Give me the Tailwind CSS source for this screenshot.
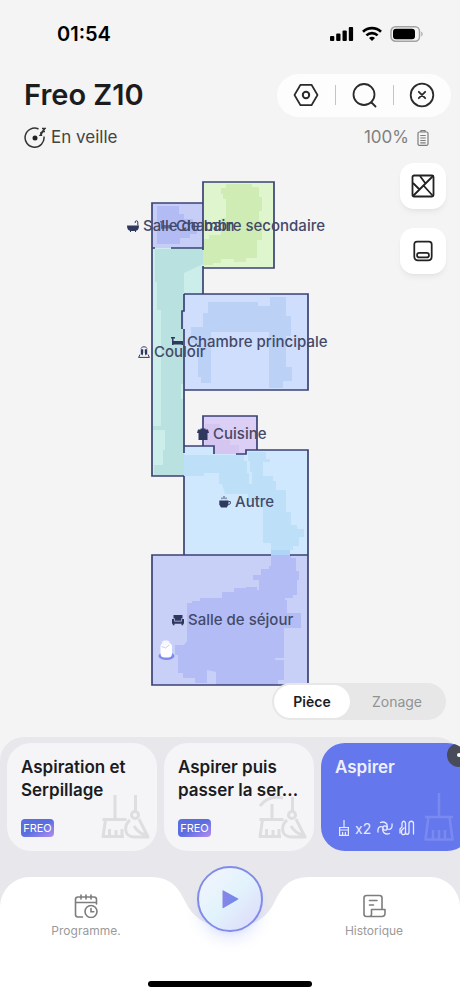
<!DOCTYPE html>
<html lang="fr">
  <head>
    <meta charset="UTF-8" />
    <meta name="viewport" content="width=device-width, initial-scale=1.0" />
    <title>Freo Z10</title>
    <script src="https://cdn.jsdelivr.net/npm/@tailwindcss/browser@4"></script>
  </head>
  <body
    class="bg-[#f4f4f4] min-h-screen flex flex-col overflow-x-hidden font-['Inter',sans-serif] text-[#1c1c1e]"
  >
    <!-- Barre d'état -->
    <div class="h-[68px] pl-[57px] pr-9 flex items-center justify-between">
      <span class="text-[20px] font-semibold text-black">01:54</span>
      <div class="flex items-center gap-2">
        <svg class="w-6 h-4" viewBox="0 0 24 16" fill="#000">
          <rect x="0" y="10" width="4.3" height="5" rx="1" />
          <rect x="6.2" y="7.5" width="4.3" height="7.5" rx="1" />
          <rect x="12.5" y="4.5" width="4.3" height="10.5" rx="1" />
          <rect x="18.8" y="1" width="4.3" height="14" rx="1" />
        </svg>
        <svg class="w-5 h-4" viewBox="0 0 20 16" fill="none" stroke="#000" stroke-width="2.6">
          <path d="M1 5.8C6 .9 14 .9 19 5.8" />
          <path d="M4.4 9.4c3.2-3 8-3 11.2 0" />
          <path d="M7 11.9c1.7-1.5 4.3-1.5 6 0l-3 3z" fill="#000" stroke="none" />
        </svg>
        <svg class="w-[34px] h-4" viewBox="0 0 34 16">
          <rect x="1" y=".8" width="28.5" height="14.4" rx="4.5" fill="none" stroke="#a3a3a3" stroke-width="1.5" />
          <rect x="3" y="2.8" width="22" height="10.4" rx="3" fill="#000" />
          <path d="M31.3 5.5c1.7.8 1.7 4.2 0 5z" fill="#a3a3a3" />
        </svg>
      </div>
    </div>

    <header class="pl-6 pr-[9px] pt-[5px]">
      <div class="flex items-center justify-between">
        <h1 class="text-[29px] leading-[44px] font-semibold">Freo Z10</h1>
        <div class="h-[43px] w-[174px] bg-[#fdfdfd] rounded-full flex items-center justify-between px-4">
          <button aria-label="Réglages">
            <svg class="w-[26px] h-[26px]" viewBox="0 0 26 26" fill="none" stroke="#2a2a2a" stroke-width="1.7" stroke-linejoin="round">
              <path d="M7.5 2.8h11L24.5 13l-6 10.2h-11L1.5 13z" />
              <circle cx="13" cy="13" r="3.2" stroke-width="2" />
            </svg>
          </button>
          <span class="w-px h-5 bg-[#c4c4c4]"></span>
          <button aria-label="Rechercher">
            <svg class="w-[26px] h-[26px]" viewBox="0 0 26 26" fill="none" stroke="#2a2a2a" stroke-width="1.8" stroke-linecap="round">
              <circle cx="13" cy="12.5" r="10.5" />
              <path d="M20.5 20.5l4 4" />
            </svg>
          </button>
          <span class="w-px h-5 bg-[#c4c4c4]"></span>
          <button aria-label="Fermer">
            <svg class="w-[26px] h-[26px]" viewBox="0 0 26 26" fill="none" stroke="#2a2a2a" stroke-width="1.8" stroke-linecap="round">
              <circle cx="13" cy="13" r="11.3" />
              <path d="M9.8 9.8l6.4 6.4M16.2 9.8l-6.4 6.4" />
            </svg>
          </button>
        </div>
      </div>
      <div class="flex items-center justify-between h-[42px] pr-[22px] text-[17px]">
        <div class="flex items-center gap-[5px] text-[#444]">
          <svg class="w-[22px] h-[22px]" viewBox="0 0 22 22" fill="none" stroke="#333" stroke-width="1.5">
            <path d="M14.5 2A9.5 9.5 0 1 0 20 9.5" />
            <circle cx="11" cy="11" r="2.5" fill="#222" stroke="none" />
            <path d="M18 1.5h3l-2.7 3H21M16 6h2l-1.8 2.2h2" stroke-width="1.4" />
          </svg>
          <span>En veille</span>
        </div>
        <div class="flex items-center gap-2 text-[#808080]">
          <span>100%</span>
          <svg class="w-3 h-4" viewBox="0 0 12 16" fill="none" stroke="#7d7d7d" stroke-width="1.2">
            <path d="M4 2V.7h4V2" />
            <rect x="1" y="2" width="10" height="13.3" rx="1.2" />
            <path d="M3.3 5.5h5.4M3.3 8h5.4M3.3 10.5h5.4M3.3 12.9h5.4" />
          </svg>
        </div>
      </div>
    </header>

    <main class="relative flex-1 pt-[21px] pb-[49px]">
      <!-- Plan de l'appartement -->
      <div class="relative w-[160px] mx-auto">
        <svg class="w-[160px] h-[508px]" viewBox="150 180 160 508" stroke="none">
          <!-- chambre secondaire -->
          <path d="M203 182h71v86h-71z" fill="#def5ce" />
          <path d="M226 184H252V187H259V197H262V211H259V221H262V240H257V258H246V262H234V259H221V263H213V265H203V239H209V235H221V218H226V199H223V194H221V188H226z" fill="#ceecb4" />
          <!-- salle de bain -->
          <path d="M152 203h51v45h-51z" fill="#c6cdf7" />
          <path d="M157 206H179V214H184V219H193V226H197V234H190V238H180V244H157z" fill="#b3bbf4" />
          <!-- couloir -->
          <path d="M152 248h51v46h-19v182h-32z" fill="#cbeeeb" />
          <path d="M155 249H203V264L184 273V384H181V399H184V476H154V465H163V450H165V430H153V426H161V310H157V282H155z" fill="#b8e1df" />
          <!-- chambre principale -->
          <path d="M184 294h124v96H184z" fill="#cedefc" />
          <path d="M208 302H258V306H270V297H286V316H291V336H286V367H292V381H283V388H269V332H211V383H201V377H198V343H191V327H203V313H208z" fill="#bcd1f6" />
          <!-- autre -->
          <path d="M184 446h30v8h32v-4h62v105H184z" fill="#d0e8fd" />
          <path d="M184 455H244V461H247V473H249V484H252V472H250V461H248V452H266V459H270V462H263V476H273V481H276V490H286V512H291V525H297V529H304V537H299V546H293V550H290V555H271V543H263V502H248V494H225L222 484H219V473H204V476H184z" fill="#bddff8" />
          <!-- cuisine -->
          <path d="M203 416h54v34h-11v4h-32v-8h-11z" fill="#dbcff5" />
          <path d="M205 424h15v16h10v5h9v9h-25v-9h-9z" fill="#d5c6f1" />
          <!-- salle de séjour -->
          <path d="M152 555h156v130H152z" fill="#c9d0f8" />
          <path d="M271 555H291V558H296V571H299V580H297V595H293V598H285V600H287V613H301V628H284V658H275V660H284V680H278V685H216V672L207 670V683H195V678H183V673H178V655H175V645H184L187 641V603H192V601H200V598H222V592H234V588H246V587H257V590H259V580H253V575H261V569H269V566H271z" fill="#b3bcf5" />
          <path d="M271 550h19v5h-19z" fill="#b0d4f5" />
          <!-- murs -->
          <g fill="none" stroke="#3a4274" stroke-width="1.7">
            <path d="M203 250v-68h71v86h-71M203 266v28" />
            <path d="M203 203h-51v273h32M171 248h32M152 248h3" />
            <path d="M184 294h124v96H184M184 294v17h-2v18M184 329v124M184 476v79" />
            <path d="M203 446v-30h54v34M184 446h30v8M236 454h10v-4h62v105M308 555h-18M271 555H152v130h156V555" />
          </g>
          <!-- station -->
          <ellipse cx="166.5" cy="656" rx="8" ry="4" fill="#7c8bf0" />
          <rect x="160.5" y="643" width="11.5" height="14.5" rx="4" fill="#fff" />
          <rect x="162" y="640.5" width="7.5" height="6" rx="2.5" fill="#f7f7ff" />
          <path d="M161.5 646.5l4 1.5 4-3" fill="none" stroke="#c8cdf4" />
        </svg>

        <div class="text-[15px] leading-5 font-medium text-[#434969] whitespace-nowrap">
          <div class="absolute left-[10px] top-[36px] flex items-center gap-1">
            <svg class="w-3 h-3" viewBox="0 0 12 12" fill="#31385f" opacity=".6"><path d="M0 1h4v1.500H2.500V5H12v4h-1.500V8.500h-8V9H1V2.500H0z" /></svg>
            <span>Chambre secondaire</span>
          </div>
          <div class="absolute -left-[23px] top-[36px] flex items-center gap-1">
            <svg class="w-3 h-3" viewBox="0 0 12 12"><path d="M0 5.5h12c0 3-1 5-3 5.200V12H8v-1H4v1H3v-1.200C1 10.500 0 8.500 0 5.500z" fill="#31385f" /><path d="M10.800 5.500V2c0-1.600-2.600-1.600-2.600 0v1" fill="none" stroke="#31385f" /></svg>
            <span>Salle de bain</span>
          </div>
          <div class="absolute -left-3 top-[162px] flex items-center gap-1">
            <svg class="w-3 h-3" viewBox="0 0 12 12"><path d="M3 2.500C4 .2 8 .2 9 2.500M2 8.500L.6 11.400h10.800L10 8.500" fill="none" stroke="#31385f" /><path d="M2.800 3.300h2.400v3.500l-.6 2.600L2.800 8zM6.800 3.300h2.400V8l-1.800 1.400-.6-2.600z" fill="#31385f" /></svg>
            <span>Couloir</span>
          </div>
          <div class="absolute left-[21px] top-[152px] flex items-center gap-1">
            <svg class="w-3 h-3" viewBox="0 0 12 12" fill="#31385f"><path d="M0 1h4v1.500H2.500V5H12v4h-1.500V8.500h-8V9H1V2.500H0z" /></svg>
            <span>Chambre principale</span>
          </div>
          <div class="absolute left-[47px] top-[244px] flex items-center gap-1">
            <svg class="w-3 h-3" viewBox="0 0 12 12" fill="#31385f"><path d="M3.500.5h5v1H11l1 3.500h-1.500v7h-9V5H0l1-3.500h2.500z" /></svg>
            <span>Cuisine</span>
          </div>
          <div class="absolute left-[69px] top-[312px] flex items-center gap-1">
            <svg class="w-3 h-3" viewBox="0 0 12 12"><path d="M.3 4.500h9.200v4L7.800 11.500H2L.3 8.500z" fill="#31385f" /><path d="M9.300 5.500h2v2.300l-2 1M3 3.200V1.500M5 3V0M7 3.200V1.500" fill="none" stroke="#31385f" stroke-width=".9" /></svg>
            <span>Autre</span>
          </div>
          <div class="absolute left-[22px] top-[430px] flex items-center gap-1">
            <svg class="w-3 h-3" viewBox="0 0 12 12" fill="#31385f"><path d="M1.500 1h9v3.400H9v2.400H3V4.400H1.500zM0 5h2.300v2.500h7.400V5H12v4.700h-.8v1.500H9.500V9.700h-7v1.500H.8V9.700H0z" /></svg>
            <span>Salle de séjour</span>
          </div>
        </div>
      </div>

      <div class="absolute right-[14px] top-1 flex flex-col gap-[19px]">
        <button aria-label="Modifier la carte" class="w-[46px] h-[46px] rounded-[14px] bg-white shadow-md shadow-black/5 flex items-center justify-center">
          <svg class="w-6 h-6" viewBox="0 0 24 24" fill="none" stroke="#222" stroke-width="1.8" stroke-linejoin="round">
            <rect x="1.5" y="1.5" width="21" height="21" rx="1.5" />
            <path d="M22 2L2 22M9 2l5.500 7.500M2 9l6 6M12.500 11.500L22 22" />
          </svg>
        </button>
        <button aria-label="Station" class="w-[46px] h-[46px] rounded-[14px] bg-white shadow-md shadow-black/5 flex items-center justify-center">
          <svg class="w-[22px] h-6" viewBox="0 0 24 24" fill="none" stroke="#222" stroke-width="1.9">
            <path d="M5.500 1.800h13c2 0 3 1.200 3 3V18c0 2.500-1.500 4.200-4 4.200h-11c-2.500 0-4-1.700-4-4.200V4.800c0-1.800 1-3 3-3z" />
            <rect x="5.5" y="14" width="13" height="5" rx="2.5" />
          </svg>
        </button>
      </div>

      <div class="absolute right-[14px] bottom-[17px] h-[37px] w-[174px] p-[2px] rounded-full bg-[#e7e7e7] flex text-[14px]">
        <button class="w-[76px] rounded-full bg-white font-semibold">Pièce</button>
        <button class="flex-1 text-[#929292]">Zonage</button>
      </div>
    </main>

    <div class="bg-[#e8e8ec] rounded-t-[24px]">
      <!-- Modes de nettoyage -->
      <div class="flex gap-[7px] px-[7px] pt-[6px] overflow-hidden">
        <button class="relative shrink-0 w-[150px] h-[108px] rounded-[24px] bg-[#f5f5f8] flex flex-col items-start justify-between text-left px-[14px] pt-[13px] pb-[14px]">
          <svg class="absolute right-[6px] bottom-3 w-[50px] h-11" viewBox="0 0 50 44" fill="none" stroke="#dedee1" stroke-width="3" stroke-linejoin="round">
            <path d="M14 0v23M1.500 24.500h24M4.500 25L2 41.500h21M8.500 34v7M15 35v6M21 34v7" />
            <path d="M34.500 0v16" />
            <circle cx="34" cy="20" r="3.5" />
            <path d="M29 25c-6 5-7 17 5 17h13L38 24M33 31c3 5 6 8 12 9" />
          </svg>
          <span class="relative text-[17px] leading-[23px] font-semibold">Aspiration et<br />Serpillage</span>
          <span class="w-[33px] h-[18px] rounded-[4px] bg-linear-to-br from-[#5a6ee0] from-50% to-[#b58df0] text-white text-[11px] leading-[18px] text-center">FREO</span>
        </button>
        <button class="relative shrink-0 w-[150px] h-[108px] rounded-[24px] bg-[#f5f5f8] flex flex-col items-start justify-between text-left px-[14px] pt-[13px] pb-[14px]">
          <svg class="absolute right-[6px] bottom-3 w-[50px] h-11" viewBox="0 0 50 44" fill="none" stroke="#dedee1" stroke-width="3" stroke-linejoin="round">
            <path d="M14 9v14M1.500 24.500h24M4.500 25L2 41.500h21M8.500 34v7M15 35v6M21 34v7" />
            <path d="M2 11C8 3 16 1 25 3M34.500 2v14" />
            <circle cx="34" cy="20" r="3.5" />
            <path d="M29 25c-6 5-7 17 5 17h13L38 24M33 31c3 5 6 8 12 9" />
          </svg>
          <span class="relative text-[17px] leading-[23px] font-semibold whitespace-nowrap">Aspirer puis<br />passer la ser...</span>
          <span class="w-[33px] h-[18px] rounded-[4px] bg-linear-to-br from-[#5a6ee0] from-50% to-[#b58df0] text-white text-[11px] leading-[18px] text-center">FREO</span>
        </button>
        <button class="relative shrink-0 w-[150px] h-[108px] rounded-[24px] bg-[#6477ec] text-white flex flex-col items-start justify-between text-left px-[14px] pt-[13px] pb-[14px] overflow-hidden">
          <svg class="absolute right-[17px] bottom-[10px] w-[30px] h-12" viewBox="0 0 30 48" fill="none" stroke="#7989ef" stroke-width="2.6" stroke-linejoin="round">
            <path d="M15 0v23M1 24h28M4.500 24L1.500 46.500h27L25.500 24M9 37v9M15 37v9M21 37v9" />
          </svg>
          <span class="absolute right-0 top-0 w-6 h-6 rounded-full bg-[#484b5a] flex items-center justify-center">
            <span class="w-1 h-1 rounded-full bg-white"></span>
          </span>
          <span class="text-[17px] leading-[23px] font-semibold text-[#eef0ff]">Aspirer</span>
          <span class="flex items-center gap-[6px] h-[18px] pl-1 text-[14px] text-[#e8ebff]">
            <svg class="w-[10px] h-4" viewBox="0 0 10 16" fill="none" stroke="#e8ebff" stroke-width="1.2"><path d="M5 0v7M.6 7.500h8.800v7.800H.6zM1 10h8M3.600 12v3M6.400 12v3" /></svg>
            <span>x2</span>
            <svg class="w-4 h-4" viewBox="0 0 16 16" fill="none" stroke="#e8ebff" stroke-width="1.3" stroke-linecap="round">
              <circle cx="8" cy="8" r="2.2" />
              <path d="M10 7C11 3.500 7.500 1 3.500 2.500M6 9c-1 3.500 2.500 6 6.500 4.500M5.800 7C2 5.500.5 8.500 1 12M10.200 9c3.800 1.500 5.300-1.500 4.800-5" />
            </svg>
            <svg class="w-4 h-4" viewBox="0 0 16 16" fill="none" stroke="#e8ebff" stroke-width="1.3" stroke-linecap="round">
              <path d="M1 13V9l2-2V3.500C3 .5 6.500.5 6.500 3.500V12c0 3.500-4 3.500-4 .5V10.500L5 8M6.500 12c0 3 3.500 3 3.500 0V3.500c0-3 4.500-3 4.500 0V14" />
            </svg>
          </span>
        </button>
      </div>

      <!-- Navigation inférieure -->
      <nav class="relative mt-[26px] h-[120px] isolate">
        <div class="absolute inset-0 -z-10 flex">
          <div class="flex-1 bg-white rounded-tl-[30px]"></div>
          <svg class="w-[160px] h-[120px]" viewBox="0 0 160 120" fill="#fff">
            <path d="M0 0C22 0 29 12 36 26C45 44 60 50 80 50S115 44 124 26C131 12 138 0 160 0V120H0z" />
          </svg>
          <div class="flex-1 bg-white rounded-tr-[30px]"></div>
        </div>
        <div class="grid grid-cols-[1fr_116px_1fr] justify-items-center items-start text-[12px] leading-4 text-[#9a9a9a]">
          <button class="mt-[17px] flex flex-col items-center gap-[5px]">
            <svg class="w-6 h-6" viewBox="0 0 24 24" fill="none" stroke="#7d7d7d" stroke-width="1.6" stroke-linecap="round">
              <path d="M8.500 23H4c-1.500 0-2.500-1-2.500-2.500V5.500C1.500 4 2.500 3 4 3h16c1.500 0 2.500 1 2.500 2.500V10M1.500 8.500h21M7 1v4M12 1v4M17 1v4" />
              <circle cx="17" cy="17.5" r="6" />
              <path d="M17 14.500v3.300h2.800" />
            </svg>
            <span>Programme.</span>
          </button>
          <button aria-label="Démarrer" class="-mt-[11px] w-[66px] h-[66px] rounded-full border-2 border-[#818ce8] bg-linear-to-br from-[#f4f4ff] via-[#e2f3fb] to-[#dcd8fb] shadow-lg shadow-indigo-300/30 flex items-center justify-center">
            <svg class="w-5 h-5" viewBox="0 0 20 20">
              <defs>
                <linearGradient id="lecture" x1="0" x2="1"><stop stop-color="#8a84e6" /><stop offset="1" stop-color="#6d8bee" /></linearGradient>
              </defs>
              <path d="M3.500 1.500L18 9.500q1 .5 0 1L3.500 19q-1 .5-1-.5V2q0-1 1-.5z" fill="url(#lecture)" />
            </svg>
          </button>
          <button class="mt-[17px] flex flex-col items-center gap-[5px]">
            <svg class="w-6 h-6" viewBox="0 0 24 24" fill="none" stroke="#7d7d7d" stroke-width="1.6" stroke-linecap="round" stroke-linejoin="round">
              <path d="M20 15.500V4c0-1.600-1-2.500-2.500-2.500H4.500C3 1.500 2 2.400 2 4v16c0 1.600 1 2.500 2.500 2.500H20c2 0 3-1.500 3-3.500v-3.500H9.500V20c0 1.500-.8 2.500-2 2.500M7.500 6.500h7.500M7.500 11h4" />
            </svg>
            <span>Historique</span>
          </button>
        </div>
        <div class="absolute bottom-[10px] left-1/2 -translate-x-1/2 w-[164px] h-[6px] rounded-full bg-black"></div>
      </nav>
    </div>
  </body>
</html>
